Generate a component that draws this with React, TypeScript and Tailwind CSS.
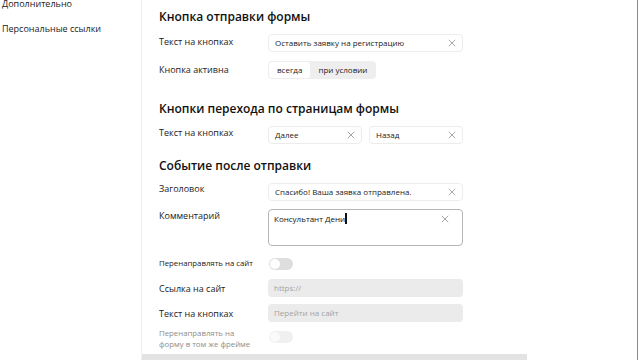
import React from 'react';

const font = { fontFamily: '"Open Sans", "Liberation Sans", sans-serif' };

const ClearIcon = ({ className = '' }: { className?: string }) => (
  <svg viewBox="0 0 10 10" className={`w-[8px] h-[8px] ${className}`} fill="none" stroke="#9a9a9a" strokeWidth="1.1">
    <path d="M1 1 L9 9 M9 1 L1 9" />
  </svg>
);

const TextInput = ({ value, width = 'w-[195px]' }: { value: string; width?: string }) => (
  <div className={`${width} h-[18px] rounded-[4px] border border-[#ececec] bg-white flex items-center justify-between pl-[6px] pr-[6px]`}>
    <span className="text-[8px] text-[#222]">{value}</span>
    <ClearIcon />
  </div>
);

const DisabledInput = ({ placeholder }: { placeholder: string }) => (
  <div className="w-[195px] h-[18px] rounded-[4px] bg-[#ebebeb] flex items-center pl-[6px]">
    <span className="text-[8px] text-[#a3a3a3]">{placeholder}</span>
  </div>
);

const Toggle = ({ faded = false }: { faded?: boolean }) => (
  <div className={`w-[24px] h-[12px] rounded-full flex items-center p-[1px] ${faded ? 'bg-[#f0f0f0]' : 'bg-[#dedede]'}`}>
    <div className={`w-[10px] h-[10px] rounded-full ${faded ? 'bg-[#fafafa]' : 'bg-white'}`} />
  </div>
);

const Row = ({ label, children, className = '' }: { label: React.ReactNode; children: React.ReactNode; className?: string }) => (
  <div className={`flex ${className}`}>
    <div className="w-[109px] shrink-0 text-[9px] text-[#222] leading-[13px]">{label}</div>
    {children}
  </div>
);

export default function App() {
  return (
    <div className="w-[640px] h-[360px] overflow-hidden bg-white flex relative" style={font}>
      {/* sidebar */}
      <aside className="w-[142px] shrink-0 border-r border-[#efefef] pl-[2px] text-[9px] text-[#222]">
        <div className="-mt-[3px] leading-[13px]">Дополнительно</div>
        <div className="mt-[12px] leading-[13px]">Персональные ссылки</div>
      </aside>

      {/* main form */}
      <main className="flex-1 relative border-r border-[#8a8a8a] mr-[2px]">
        <div className="pl-[17px] pt-[9px]">
          <h2 className="text-[12px] font-semibold text-[#111] leading-[16px]">Кнопка отправки формы</h2>

          <Row label={<span className="block mt-[1px]">Текст на кнопках</span>} className="mt-[9px]">
            <TextInput value="Оставить заявку на регистрацию" />
          </Row>

          <Row label={<span className="block mt-[2px]">Кнопка активна</span>} className="mt-[9px]">
            <div className="h-[18px] rounded-[4px] bg-[#eeeeee] flex items-center p-[1px] text-[8px] text-[#222]">
              <div className="h-[16px] px-[8px] bg-white rounded-[3px] flex items-center">всегда</div>
              <div className="h-[16px] px-[8px] flex items-center">при условии</div>
            </div>
          </Row>

          <h2 className="mt-[22px] text-[12px] font-semibold text-[#111] leading-[16px]">Кнопки перехода по страницам формы</h2>

          <Row label={<span className="block mt-[0px]">Текст на кнопках</span>} className="mt-[9px]">
            <div className="flex gap-[7px]">
              <TextInput value="Далее" width="w-[94px]" />
              <TextInput value="Назад" width="w-[94px]" />
            </div>
          </Row>

          <h2 className="mt-[14px] text-[12px] font-semibold text-[#111] leading-[16px]">Событие после отправки</h2>

          <Row label={<span className="block mt-[-1px]">Заголовок</span>} className="mt-[9px]">
            <TextInput value="Спасибо! Ваша заявка отправлена." />
          </Row>

          <Row label={<span className="block mt-[0px]">Комментарий</span>} className="mt-[8px]">
            <div className="w-[195px] h-[37px] rounded-[4px] border border-[#b5b5b5] bg-white flex justify-between pl-[5px] pr-[13px] pt-[3px]">
              <span className="text-[8px] text-[#111] leading-[12px] flex items-start">
                Консультант Дени<span className="inline-block w-[1.5px] h-[11px] bg-[#111]" />
              </span>
              <ClearIcon className="mt-[2px]" />
            </div>
          </Row>

          <Row label={<span className="block text-[7.8px] mt-[-1px]">Перенаправлять на сайт</span>} className="mt-[12px] items-start">
            <div className="ml-[1px]"><Toggle /></div>
          </Row>

          <Row label={<span className="block mt-[3px]">Ссылка на сайт</span>} className="mt-[9px]">
            <DisabledInput placeholder="https://" />
          </Row>

          <Row label={<span className="block mt-[3px]">Текст на кнопках</span>} className="mt-[7px]">
            <DisabledInput placeholder="Перейти на сайт" />
          </Row>

          <Row label={<span className="block text-[7.8px] leading-[11px] text-[#8c8c8c] -mt-[3px]">Перенаправлять на<br />форму в том же фрейме</span>} className="mt-[9px]">
            <div className="ml-[1px]"><Toggle faded /></div>
          </Row>
        </div>

        {/* horizontal scrollbar */}
        <div className="absolute left-0 bottom-0 w-[385px] h-[6px] bg-[#e3e3e3]" />
      </main>
    </div>
  );
}
